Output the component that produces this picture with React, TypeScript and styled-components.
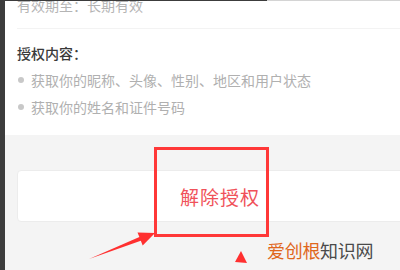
import React from "react";
import styled, {createGlobalStyle} from "styled-components";

const GlobalStyle = createGlobalStyle`
  html, body {
    margin: 0;
    padding: 0;
    width: 400px;
    height: 270px;
    overflow: hidden;
    background: #f4f4f4;
    font-family: "Noto Sans CJK SC", "Noto Sans", sans-serif;
  }
`;

const Screen = styled.div`
  position: relative;
  display: flex;
  width: 400px;
  height: 270px;
  overflow: hidden;
`;

const SideStrip = styled.div`
  width: 5px;
  flex-shrink: 0;
  background: #3c3c3c;
`;

const Main = styled.div`
  flex: 1;
  display: flex;
  flex-direction: column;
  min-width: 0;
`;

const TopEdge = styled.div`
  display: flex;
  height: 1px;
  flex-shrink: 0;
`;

const EdgePart = styled.div<{$dark?: boolean; $w: number}>`
  width: ${(p) => p.$w}px;
  height: 1px;
  background: ${(p) => (p.$dark ? "#3c3c3c" : "#d4d4d4")};
`;

const InfoPanel = styled.div`
  height: 134px;
  flex-shrink: 0;
  background: #ffffff;
  padding-left: 12px;
  overflow: hidden;
`;

// first line of the page is scrolled half out of view
const Validity = styled.div`
  margin-top: -6px;
  height: 33px;
  line-height: 20px;
  font-size: 14px;
  color: #b4b4b4;
  border-bottom: 1px solid #f3f3f3;
`;

const SectionTitle = styled.div`
  margin-top: 14px;
  font-size: 14px;
  line-height: 20px;
  font-weight: 500;
  color: #3a3a3a;
`;

const BulletList = styled.ul`
  list-style: none;
  margin: 3px 0 0;
  padding: 0;
`;

const Bullet = styled.li`
  display: flex;
  align-items: center;
  gap: 7px;
  height: 27px;
  font-size: 14px;
  color: #b0b0b0;
  white-space: nowrap;

  &::before {
    content: "";
    width: 6px;
    height: 6px;
    border-radius: 50%;
    background: #c8c8c8;
    margin-left: 1px;
  }
`;

const ActionArea = styled.div`
  flex: 1;
  background: #f4f4f4;
  padding: 35px 0 0 12px;
`;

const RevokeCard = styled.button`
  width: 406px;
  height: 52px;
  margin: 0;
  border: 1px solid #ececec;
  border-radius: 4px;
  background: #ffffff;
  font-family: inherit;
  font-size: 19px;
  letter-spacing: 1px;
  color: #f0525a;
  padding: 0;
  cursor: pointer;
`;

const Highlight = styled.div`
  position: absolute;
  left: 154px;
  top: 147px;
  width: 109px;
  height: 84px;
  border: 3px solid #ff3838;
`;

const Overlay = styled.svg`
  position: absolute;
  left: 0;
  top: 0;
  pointer-events: none;
`;

const Watermark = styled.div`
  position: absolute;
  left: 267px;
  top: 238px;
  font-size: 18px;
  line-height: 24px;
  letter-spacing: -0.3px;
  color: #4a4a4a;
`;

const WatermarkBrand = styled.span`
  color: #e0671d;
`;

export default function App() {
  return (
    <Screen>
      <GlobalStyle />
      <SideStrip />
      <Main>
        <TopEdge>
          <EdgePart $dark $w={262} />
          <EdgePart $w={133} />
        </TopEdge>
        <InfoPanel>
          <Validity>有效期至：长期有效</Validity>
          <SectionTitle>授权内容：</SectionTitle>
          <BulletList>
            <Bullet>获取你的昵称、头像、性别、地区和用户状态</Bullet>
            <Bullet>获取你的姓名和证件号码</Bullet>
          </BulletList>
        </InfoPanel>
        <ActionArea>
          <RevokeCard>解除授权</RevokeCard>
        </ActionArea>
      </Main>

      <Highlight />
      <Overlay width="400" height="270" viewBox="0 0 400 270">
        <polygon
          points="89,259 139.4,237 137.5,232.4 155,233 142.7,245.4 140.8,240.8"
          fill="#ff3030"
        />
        <polygon points="241,251 235,262 247,263" fill="#ff3030" />
      </Overlay>
      <Watermark>
        <WatermarkBrand>爱创根</WatermarkBrand>知识网
      </Watermark>
    </Screen>
  );
}
